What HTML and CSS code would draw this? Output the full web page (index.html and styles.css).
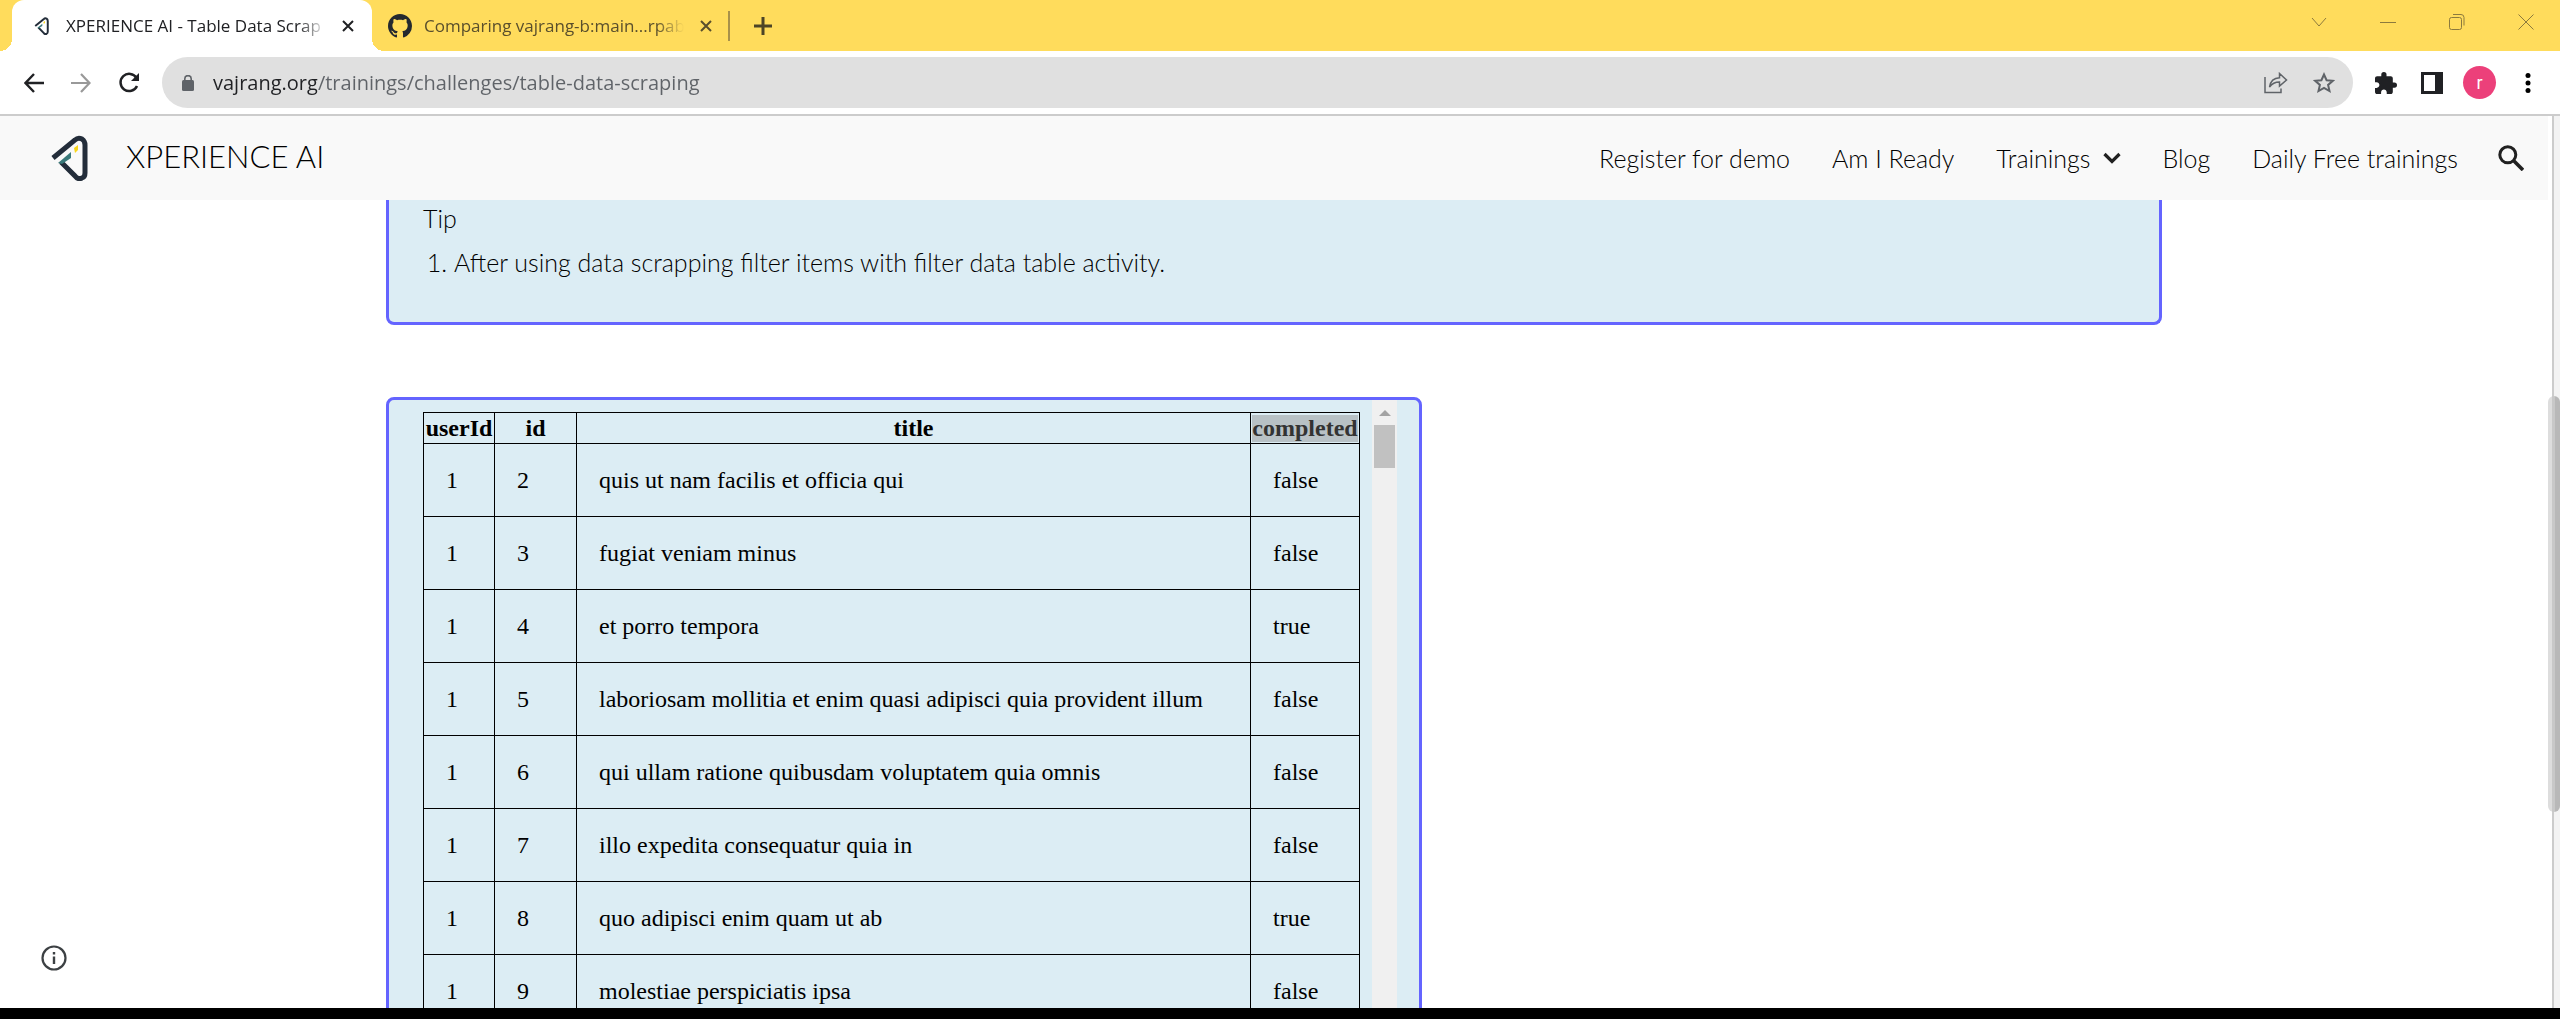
FILE: index.html
```html
<!DOCTYPE html>
<html lang="en">
<head>
<meta charset="utf-8">
<title>XPERIENCE AI - Table Data Scraping</title>
<meta name="viewport" content="width=device-width, initial-scale=1">
<link rel="stylesheet" href="styles.css">
</head>
<body>
<svg class="sprite" aria-hidden="true">
  <symbol id="logo" viewBox="0 0 38 46">
    <path d="M3 23 25 5q3-3 7-1 3 2 3 6v28q0 4-3 5-4 2-7-2L11 27" fill="none" stroke="#232d3a" stroke-width="5"/>
    <path d="M8 28 21 17v6L12 29z" fill="#39797a"/>
    <path d="M24 13l4-3v5l-3 3z" fill="#f9d71c"/>
  </symbol>
</svg>
<div class="browser">
  <div class="tabstrip">
    <div class="tab tab-active">
      <svg class="tab-logo" aria-hidden="true"><use href="#logo"/></svg>
      <button class="tab-title" type="button">XPERIENCE AI - Table Data Scrap</button>
      <button class="tab-close" type="button" aria-label="Close tab"><svg viewBox="0 0 12 12" width="12" height="12"><path d="M1 1l10 10M11 1 1 11" stroke="currentColor" stroke-width="2" fill="none"/></svg></button>
    </div>
    <div class="tab tab-idle">
      <svg class="tab-github" viewBox="0 0 16 16" aria-hidden="true"><path fill="#24292f" d="M8 0C3.58 0 0 3.58 0 8c0 3.54 2.29 6.53 5.47 7.59.4.07.55-.17.55-.38 0-.19-.01-.82-.01-1.49-2.01.37-2.53-.49-2.69-.94-.09-.23-.48-.94-.82-1.13-.28-.15-.68-.52-.01-.53.63-.01 1.08.58 1.23.82.72 1.21 1.87.87 2.33.66.07-.52.28-.87.51-1.07-1.78-.2-3.64-.89-3.64-3.95 0-.87.31-1.59.82-2.15-.08-.2-.36-1.02.08-2.12 0 0 .67-.21 2.2.82.64-.18 1.32-.27 2-.27s1.36.09 2 .27c1.53-1.04 2.2-.82 2.2-.82.44 1.1.16 1.92.08 2.12.51.56.82 1.27.82 2.15 0 3.07-1.87 3.75-3.65 3.95.29.25.54.73.54 1.48 0 1.07-.01 1.93-.01 2.2 0 .21.15.46.55.38A8.01 8.01 0 0 0 16 8c0-4.42-3.58-8-8-8z"/></svg>
      <button class="tab-title" type="button">Comparing vajrang-b:main...rpab</button>
      <button class="tab-close" type="button" aria-label="Close tab"><svg viewBox="0 0 12 12" width="12" height="12"><path d="M1 1l10 10M11 1 1 11" stroke="currentColor" stroke-width="2" fill="none"/></svg></button>
    </div>
    <button class="new-tab" type="button" aria-label="New tab"><svg viewBox="0 0 18 18" width="18" height="18"><path d="M9 0v18M0 9h18" stroke="currentColor" stroke-width="3"/></svg></button>
    <div class="window-controls">
      <button type="button" aria-label="Search tabs"><svg viewBox="0 0 16 16" width="16" height="16"><path d="M1 4l7 8 7-8"/></svg></button>
      <button type="button" aria-label="Minimize"><svg viewBox="0 0 16 16" width="16" height="16"><path d="M0 8.500h16"/></svg></button>
      <button type="button" aria-label="Restore"><svg viewBox="0 0 16 16" width="16" height="16"><rect x=".5" y="3.500" width="12" height="12" rx="2"/><path d="M4 .5h8q3 0 3 3v8"/></svg></button>
      <button type="button" aria-label="Close"><svg viewBox="0 0 16 16" width="16" height="16"><path d="M.5.5l15 15M15.500.5l-15 15"/></svg></button>
    </div>
  </div>

  <div class="toolbar">
    <div class="nav-tools">
      <button type="button" aria-label="Back"><svg viewBox="0 0 20 20" width="20" height="20"><path d="M20 10H2M10 1 1.500 10l8.500 9" stroke="#202124" stroke-width="2.400" fill="none"/></svg></button>
      <button type="button" aria-label="Forward"><svg viewBox="0 0 20 20" width="20" height="20"><path d="M0 10h18M10 1l8.500 9-8.500 9" stroke="#999" stroke-width="2.200" fill="none"/></svg></button>
      <button type="button" aria-label="Reload"><svg viewBox="0 0 22 22" width="22" height="22"><path d="M18.500 6A8.600 8.600 0 1 0 19 14" stroke="#202124" stroke-width="2.500" fill="none"/><path d="M21 1v8h-8z" fill="#202124"/></svg></button>
    </div>
    <div class="omnibox">
      <svg class="lock" viewBox="0 0 12 16" width="12" height="16" aria-hidden="true"><rect y="5" width="12" height="11" rx="1.500" fill="#5f6368"/><path d="M2.800 6V3.800a3.200 3.200 0 0 1 6.400 0V6" fill="none" stroke="#5f6368" stroke-width="1.600"/></svg>
      <input class="address" type="text" aria-label="Address" value="vajrang.org/trainings/challenges/table-data-scraping">
      <button type="button" aria-label="Share"><svg viewBox="0 0 24 22" width="24" height="22"><path d="M1 5v15.500h16v-4M5.500 15C6.500 9 10 6 15.500 5.800V1.500l7 6.500-7 6v-4c-4.500 0-7.500 1.500-10 5z" fill="none" stroke="#5f6368" stroke-width="1.500"/></svg></button>
      <button type="button" aria-label="Bookmark this tab"><svg viewBox="0 0 22 22" width="22" height="22"><path d="M11 2.500l2.600 5.700 6.200.6-4.700 4.100 1.400 6.100L11 15.800 5.500 19l1.400-6.100L2.200 8.800l6.200-.6z" fill="none" stroke="#5f6368" stroke-width="2"/></svg></button>
    </div>
    <div class="app-tools">
      <button type="button" aria-label="Extensions"><svg viewBox="2 1 21 21" width="22" height="22"><path d="M20.500 11H19V7c0-1.100-.9-2-2-2h-4V3.500a2.500 2.500 0 0 0-5 0V5H4c-1.100 0-1.990.9-1.990 2v3.800H3.500c1.490 0 2.700 1.210 2.700 2.700s-1.210 2.700-2.700 2.700H2V20c0 1.100.9 2 2 2h3.800v-1.500c0-1.490 1.210-2.700 2.700-2.700s2.700 1.210 2.700 2.700V22H17c1.100 0 2-.9 2-2v-4h1.500a2.500 2.500 0 0 0 0-5z" fill="#202124"/></svg></button>
      <button type="button" aria-label="Side panel"><svg viewBox="0 0 22 22" width="22" height="22"><path d="M0 0h22v22H0zM3 3v16h11V3z" fill="#202124" fill-rule="evenodd"/></svg></button>
      <button class="avatar" type="button" aria-label="Profile">r</button>
      <button type="button" aria-label="Menu"><svg viewBox="0 0 6 20" width="6" height="20"><circle cx="3" cy="2.500" r="2.500"/><circle cx="3" cy="10" r="2.500"/><circle cx="3" cy="17.500" r="2.500"/></svg></button>
    </div>
  </div>

  <div class="viewport">
    <div class="page">
      <header class="site-header">
        <a class="brand" href="#"><svg class="brand-logo" aria-hidden="true"><use href="#logo"/></svg><span class="brand-name">XPERIENCE AI</span></a>
        <nav class="site-nav">
          <a href="#">Register for demo</a>
          <a href="#">Am I Ready</a>
          <a class="has-menu" href="#">Trainings <svg viewBox="0 0 18 12" width="18" height="12" aria-hidden="true"><path d="M1.500 2 9 9.500 16.500 2" fill="none" stroke="#212121" stroke-width="3.200"/></svg></a>
          <a href="#">Blog</a>
          <a href="#">Daily Free trainings</a>
        </nav>
        <button class="search" type="button" aria-label="Search"><svg viewBox="0 0 26 26" width="26" height="26"><circle cx="9.800" cy="9.800" r="8" fill="none" stroke="#212121" stroke-width="3"/><path d="M15 15l10 10" stroke="#212121" stroke-width="3.600"/></svg></button>
      </header>

      <main class="content">
        <section class="panel tip">
          <p class="tip-heading">Tip</p>
          <ol class="tip-list"><li>After using data scrapping filter items with filter data table activity.</li></ol>
        </section>

        <section class="panel data">
          <table class="todos">
            <thead><tr><th class="col-user">userId</th><th class="col-id">id</th><th class="col-title">title</th><th class="col-done"><span class="selected">completed</span></th></tr></thead>
            <tbody>
              <tr><td>1</td><td>2</td><td>quis ut nam facilis et officia qui</td><td>false</td></tr>
              <tr><td>1</td><td>3</td><td>fugiat veniam minus</td><td>false</td></tr>
              <tr><td>1</td><td>4</td><td>et porro tempora</td><td>true</td></tr>
              <tr><td>1</td><td>5</td><td>laboriosam mollitia et enim quasi adipisci quia provident illum</td><td>false</td></tr>
              <tr><td>1</td><td>6</td><td>qui ullam ratione quibusdam voluptatem quia omnis</td><td>false</td></tr>
              <tr><td>1</td><td>7</td><td>illo expedita consequatur quia in</td><td>false</td></tr>
              <tr><td>1</td><td>8</td><td>quo adipisci enim quam ut ab</td><td>true</td></tr>
              <tr><td>1</td><td>9</td><td>molestiae perspiciatis ipsa</td><td>false</td></tr>
            </tbody>
          </table>
          <div class="frame-scroll" aria-hidden="true"><span class="frame-arrow"></span><span class="frame-thumb"></span></div>
        </section>
      </main>
      <button class="info" type="button" aria-label="Information"><svg viewBox="0 0 26 26" width="26" height="26"><circle cx="13" cy="13" r="11.500" fill="none" stroke="#3c4043" stroke-width="2.200"/><path d="M13 11.500V19M13 7v2.500" stroke="#3c4043" stroke-width="2.400"/></svg></button>
    </div>
    <div class="page-scroll" aria-hidden="true"><span class="page-thumb"></span></div>
  </div>
</div>
</body>
</html>
```
FILE: styles.css
```css
* { box-sizing: border-box; }

body {
  margin: 0;
  background: #000;
  color: #000;
  font-family: Lato, "Liberation Sans", sans-serif;
  font-weight: 300;
}

button {
  margin: 0;
  padding: 0;
  border: 0;
  background: none;
  color: inherit;
  font: inherit;
}

svg { display: block; flex: none; }
.sprite { position: absolute; width: 0; height: 0; }

.browser {
  display: flex;
  flex-direction: column;
  height: 100vh;
  padding-bottom: 11px;
}

/* Tab strip */
.tabstrip {
  display: flex;
  flex: none;
  align-items: center;
  height: 51px;
  padding-left: 12px;
  background: #ffdc5c;
  font-family: "Open Sans", "Noto Sans", sans-serif;
  font-weight: 400;
}

.tab { display: flex; align-items: center; height: 100%; }

.tab-active {
  position: relative;
  width: 360px;
  padding: 0 18px 0 22px;
  border-radius: 12px 12px 0 0;
  background: #fff;
  color: #202124;
}

.tab-active::before,
.tab-active::after {
  content: "";
  position: absolute;
  bottom: 0;
  width: 12px;
  height: 12px;
}
.tab-active::before { left: -12px; background: radial-gradient(circle at 0 0, transparent 12px, #fff 12px); }
.tab-active::after { right: -12px; background: radial-gradient(circle at 100% 0, transparent 12px, #fff 12px); }

.tabstrip .tab-idle {
  width: 358px;
  height: 30px;
  padding: 0 16px;
  border-right: 2px solid #a8914a;
  color: #5a4f2c;
}

.tab-logo { width: 15px; height: 18px; margin-right: 17px; }
.tab-github { width: 24px; height: 24px; margin-right: 12px; }

.tab-title {
  flex: 1;
  min-width: 0;
  font-size: 17px;
  line-height: 24px;
  text-align: left;
  white-space: nowrap;
  -webkit-mask-image: linear-gradient(to left, transparent, #000 28px);
  mask-image: linear-gradient(to left, transparent, #000 28px);
}

.tab-close { margin-left: 16px; }
.new-tab { margin-left: 24px; color: #4d4426; }

.window-controls {
  display: flex;
  gap: 53px;
  margin-left: auto;
  padding: 0 26px 8px 0;
}
.window-controls svg { fill: none; stroke: #8c7a3d; stroke-width: 1; }

/* Toolbar */
.toolbar {
  display: flex;
  flex: none;
  align-items: center;
  gap: 22px;
  height: 65px;
  padding: 0 29px 0 24px;
  border-bottom: 2px solid #ccc;
  background: #fff;
}

.nav-tools { display: flex; align-items: center; gap: 27px; }
.app-tools { display: flex; align-items: center; gap: 24px; }

.omnibox {
  display: flex;
  flex: 1;
  align-items: center;
  gap: 25px;
  height: 51px;
  padding: 0 18px 0 20px;
  border-radius: 26px;
  background: #e0e0e0;
}
.lock { margin-right: -6px; }

.address {
  flex: 1;
  min-width: 0;
  padding: 0;
  border: 0;
  outline: 0;
  background: linear-gradient(to right, #202124 104px, #5f6368 104px);
  -webkit-background-clip: text;
  background-clip: text;
  color: transparent;
  font: 20px/30px "Open Sans", "Noto Sans", sans-serif;
}

.avatar {
  width: 33px;
  height: 33px;
  margin: 0 5px 0 -4px;
  border-radius: 50%;
  background: #ec407a;
  color: #fff;
  font: 18px/30px Roboto, sans-serif;
}

/* Page */
.viewport {
  display: flex;
  flex: 1;
  min-height: 0;
  overflow: hidden;
  background: #fff;
}

.page { position: relative; flex: 1; min-width: 0; }

.site-header {
  display: flex;
  align-items: center;
  height: 84px;
  padding: 0 24px 0 50px;
  background: #f9f9f9;
}

.brand {
  display: flex;
  align-items: center;
  gap: 38px;
  margin-right: auto;
  color: inherit;
  font-size: 31px;
  line-height: 36px;
  text-decoration: none;
}
.brand-logo { width: 38px; height: 46px; }
.brand-name { padding-bottom: 4px; }

.site-nav { display: flex; gap: 42px; }
.site-nav a {
  color: inherit;
  font-size: 25px;
  line-height: 32px;
  text-decoration: none;
}
.site-nav .has-menu { display: flex; align-items: center; gap: 12px; }
.search { margin-left: 40px; }

.content {
  max-width: 1776px;
  margin: 0 auto;
}

.panel {
  border: 3px solid #6464ff;
  border-radius: 8px;
  background: #dcedf4;
}

.tip {
  padding: 0 34px 42px;
  border-top: 0;
  border-radius: 0 0 8px 8px;
  font-size: 25px;
  line-height: 36px;
}
.tip-heading { margin: 0 0 8px; }
.tip-list { margin: 0; padding-left: 31px; }

.data {
  display: flex;
  align-items: flex-start;
  gap: 12px;
  width: 1036px;
  margin-top: 72px;
  padding: 0 22px 0 34px;
}

.todos {
  flex: 1;
  margin-top: 12px;
  border-collapse: collapse;
  table-layout: fixed;
  color: #000;
  font: 24px/27px "Liberation Serif", "Times New Roman", serif;
}
.todos th, .todos td { border: 1px solid #000; }
.todos th { height: 31px; padding: 1px; }
.todos td { height: 73px; padding: 0 22px; }
.col-user { width: 71px; }
.col-id { width: 82px; }
.col-done { width: 109px; }
.selected {
  display: block;
  background: #b8c1c5;
  color: #333;
}

.frame-scroll {
  display: flex;
  flex-direction: column;
  align-items: center;
  align-self: stretch;
  gap: 9px;
  width: 25px;
  padding-top: 10px;
  background: #f0f0f0;
}
.frame-arrow {
  border: 6px solid transparent;
  border-top: 0;
  border-bottom-color: #a3a3a3;
}
.frame-thumb { width: 21px; height: 43px; background: #c1c1c1; }

.info { position: absolute; left: 41px; bottom: 37px; }

.page-scroll {
  width: 12px;
  padding-top: 280px;
  background: linear-gradient(to right, #fff 4px, #ccc 4px, #ccc 6px, #f3f3f3 6px);
}
.page-thumb {
  display: block;
  height: 416px;
  border-radius: 6px;
  background: linear-gradient(to right, #ddd 4px, #c8c8c8 4px, #c8c8c8 7px, #b8b8b8 7px);
}
```
